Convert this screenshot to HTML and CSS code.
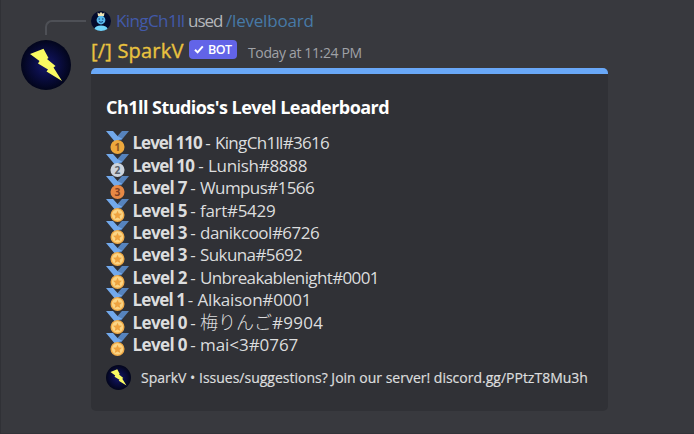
FILE: index.html
```
<!DOCTYPE html>
<html lang="en">
<head>
<meta charset="utf-8">
<title>Level Leaderboard</title>
<link rel="stylesheet" href="styles.css">
</head>
<body>
<svg class="defs" width="0" height="0" aria-hidden="true">
  <defs>
    <radialGradient id="glow"><stop offset="0" stop-color="#15186b"/><stop offset=".5" stop-color="#0a0d43"/><stop offset="1" stop-color="#02051b"/></radialGradient>
    <symbol id="bolt" viewBox="0 0 50 50"><circle cx="25" cy="25" r="25" fill="url(#glow)"/><path d="M9 14L22.5 8.7L27.5 18L26 19L34.5 26L32.5 27.5L41 41L25.5 31.5L27 29.5L17 23.5L18.5 21Z" fill="#f9fa62"/></symbol>
    <symbol id="ribbon" viewBox="0 0 36 36"><path d="M25 0l-7 8 5.4 7.3 1.2-1.5L36 0z" fill="#5683bd"/><path d="M18 8l-7-8H0l14 17 11.5-4.7z" fill="#72a9ec"/></symbol>
    <symbol id="star" viewBox="0 0 36 36"><use href="#ribbon"/><circle cx="18" cy="25" r="11" fill="#f0ab48"/><circle cx="18" cy="25" r="8.8" fill="#fbd483"/><path d="M18 18.2l2 4.6 5 .4-3.8 3.3 1.2 4.9-4.4-2.6-4.4 2.6 1.2-4.9-3.8-3.3 5-.4z" fill="#eea23f"/></symbol>
    <symbol id="check" viewBox="0 0 10 9"><path d="M1 4.8L3.6 7.4L8.8 1.3" fill="none" stroke="#fff" stroke-width="2"/></symbol>
  </defs>
</svg>
<main class="message">
  <div class="gutter">
    <div class="spine"></div>
    <svg class="avatar"><use href="#bolt"/></svg>
  </div>
  <div class="content">
    <div class="reply">
      <svg class="reply-avatar" viewBox="0 0 20 20"><circle cx="10" cy="10" r="10" fill="#030a2c"/><path d="M3.5 18Q4 14.5 10 14.5Q16 14.5 16.5 18Q10 22 3.5 18Z" fill="#72d5fb"/><circle cx="10" cy="9" r="4.4" fill="#58b9ed"/><path d="M6.5 1.5L8.3 2.8L10 1L11.7 2.8L13.5 1.5L13 5H7Z" fill="#eee3b5"/><path d="M7.5 8H9M11 8h1.5M8 10.5q2 1.5 4 0" stroke="#123a75" fill="none"/></svg>
      <span class="user">KingCh1ll</span><span class="used">used</span><span class="command">/levelboard</span>
    </div>
    <div class="header">
      <span class="author">[/] SparkV</span>
      <span class="bot"><svg class="check"><use href="#check"/></svg><span>BOT</span></span>
      <span class="time">Today at 11:24 PM</span>
    </div>
    <section class="embed">
      <h1>Ch1ll Studios's Level Leaderboard</h1>
      <ul>
        <li><svg class="medal" viewBox="0 0 36 36"><use href="#ribbon"/><circle cx="18" cy="25" r="11" fill="#eda83d"/><text x="18" y="31" fill="#8b5521">1</text></svg><b class="l110">Level 110</b><i>-</i><span class="n1">KingCh1ll#3616</span></li>
        <li><svg class="medal" viewBox="0 0 36 36"><use href="#ribbon"/><circle cx="18" cy="25" r="11" fill="#ccd3dc"/><text x="18" y="31" fill="#59616b">2</text></svg><b class="l10">Level 10</b><i>-</i><span class="n2">Lunish#8888</span></li>
        <li><svg class="medal" viewBox="0 0 36 36"><use href="#ribbon"/><circle cx="18" cy="25" r="11" fill="#e78845"/><text x="18" y="31" fill="#803f24">3</text></svg><b>Level 7</b><i>-</i><span class="n3">Wumpus#1566</span></li>
        <li><svg class="medal"><use href="#star"/></svg><b>Level 5</b><i>-</i><span class="n4">fart#5429</span></li>
        <li><svg class="medal"><use href="#star"/></svg><b>Level 3</b><i>-</i><span class="n5">danikcool#6726</span></li>
        <li><svg class="medal"><use href="#star"/></svg><b>Level 3</b><i>-</i><span class="n6">Sukuna#5692</span></li>
        <li><svg class="medal"><use href="#star"/></svg><b>Level 2</b><i>-</i><span class="n7">Unbreakablenight#0001</span></li>
        <li><svg class="medal"><use href="#star"/></svg><b class="l1">Level 1</b><i>-</i><span class="n8">Alkaison#0001</span></li>
        <li><svg class="medal"><use href="#star"/></svg><b>Level 0</b><i>-</i><span class="n9"><span class="cjk" lang="ja">梅りんご</span>#9904</span></li>
        <li><svg class="medal"><use href="#star"/></svg><b>Level 0</b><i>-</i><span class="n10">mai&lt;3#0767</span></li>
      </ul>
      <footer><svg class="footer-icon"><use href="#bolt"/></svg><span>SparkV • Issues/suggestions? Join our server! discord.gg/PPtzT8Mu3h</span></footer>
    </section>
  </div>
</main>
</body>
</html>
```
FILE: styles.css
```
* { box-sizing: border-box; }
body { margin: 0; height: 434px; background: #38393e; border-left: 1px solid #303136; font: 17px/22px "Open Sans", "Noto Sans CJK JP", sans-serif; color: #dcddde; overflow: hidden; white-space: nowrap; }
.defs { position: absolute; }
.message { display: flex; height: 434px; border-bottom: 1px solid #323338; }
.gutter { width: 90px; padding: 20px 0 0 20px; }
.spine { width: 41px; height: 15px; margin: 0 0 5px 24px; border: 2px solid #4e5056; border-width: 2px 0 0 2px; border-top-left-radius: 7px; }
.avatar { display: block; width: 50px; height: 50px; }
.content { width: 517px; }
.reply { display: flex; align-items: center; height: 22px; margin-top: 10px; color: #b5b7bb; }
.reply-avatar { width: 20px; height: 20px; margin-right: 5px; }
.user { width: 72px; color: #4259aa; letter-spacing: -.6px; }
.used { width: 38px; letter-spacing: -1px; }
.command { color: #477aa7; letter-spacing: -.2px; }
.header { display: flex; height: 36px; padding-top: 8px; }
.author { width: 98px; font-size: 20px; color: #e9c23f; letter-spacing: .2px; -webkit-text-stroke: .35px #e9c23f; }
.bot { display: flex; align-items: center; width: 48px; height: 19px; padding-left: 5px; border-radius: 4px; background: #6264e8; color: #fff; font-size: 12.5px; font-weight: 600; letter-spacing: -.5px; }
.check { width: 10px; height: 9px; margin-right: 4px; }
.time { margin: 2px 0 0 11px; font-size: 14px; color: #a0a2a7; letter-spacing: -.36px; }
.embed { height: 343px; padding: 22px 15px 0; border-top: 6px solid #69a8f8; border-radius: 5px; background: #303136; }
h1 { margin: 0 0 14px; font-size: 18px; line-height: 22px; font-weight: 700; color: #fff; letter-spacing: -.54px; }
ul { margin: 0; padding: 0; list-style: none; }
li { display: flex; align-items: center; height: 22.45px; }
.medal { width: 23px; height: 23px; margin: -1px 3.5px 0 0; }
.medal text { font: 700 16px "Open Sans", sans-serif; text-anchor: middle; }
b { width: 53.5px; letter-spacing: -.6px; }
.l110 { width: 68.5px; letter-spacing: -1px; }
.l10 { width: 61.5px; letter-spacing: -.85px; }
.l1 { width: 51px; letter-spacing: -.85px; }
i { width: 14px; font-style: normal; text-align: center; }
.n1 { letter-spacing: -.68px; }
.n2 { letter-spacing: -.3px; }
.n3 { letter-spacing: -.6px; }
.n4 { letter-spacing: -.3px; }
.n5 { letter-spacing: -.5px; }
.n6 { letter-spacing: -.6px; }
.n7 { letter-spacing: -.63px; }
.n8 { letter-spacing: -.2px; }
.n9 { letter-spacing: .25px; }
.cjk { font-size: 18px; font-weight: 300; letter-spacing: 0; }
.n10 { letter-spacing: -.05px; }
footer { display: flex; align-items: center; height: 25px; margin-top: 9px; font-size: 14px; -webkit-text-stroke: .2px #dcddde; }
.footer-icon { width: 25px; height: 25px; margin-right: 10px; -webkit-text-stroke: 0; }
```
